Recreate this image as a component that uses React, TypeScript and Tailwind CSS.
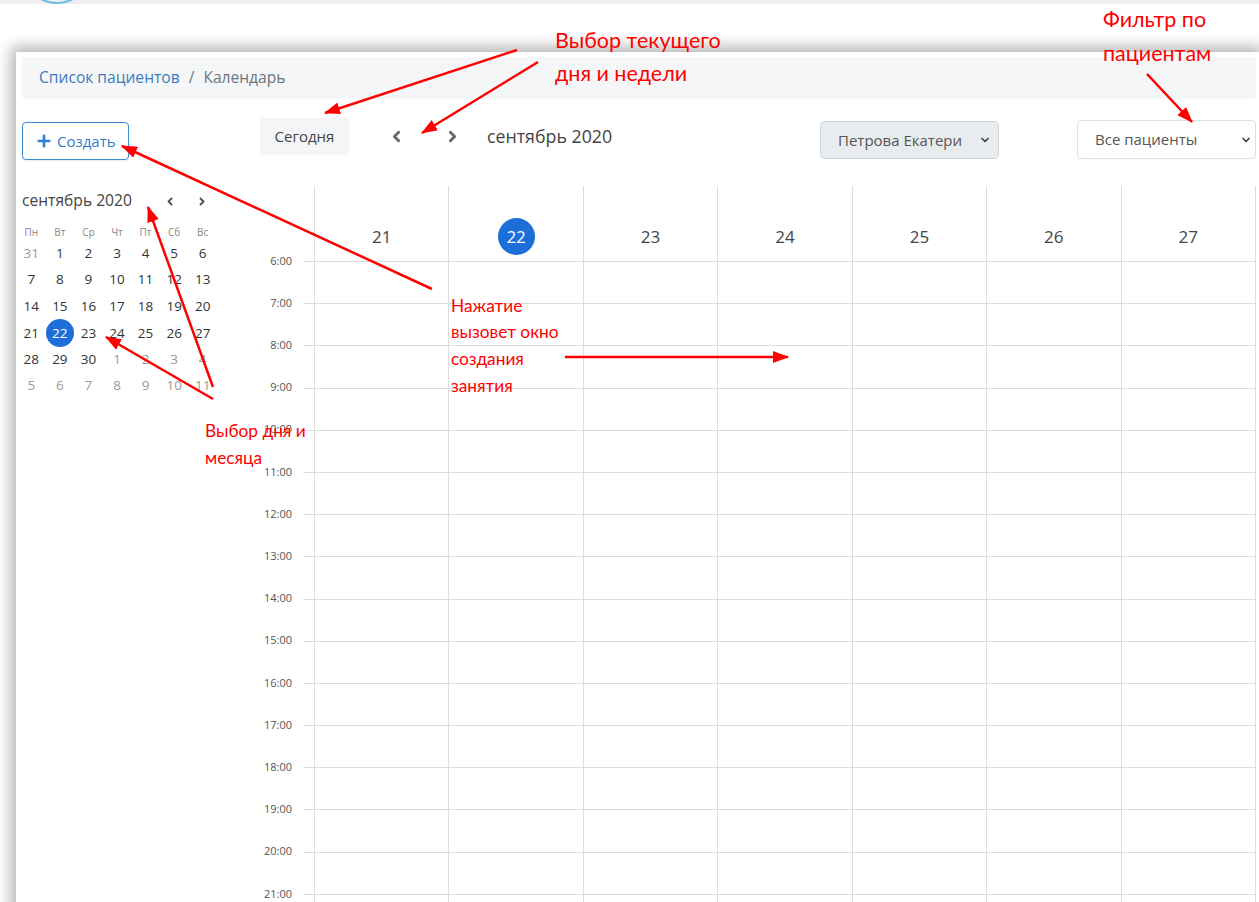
import React from 'react';
import { ChevronLeft, ChevronRight, ChevronDown, Plus } from 'lucide-react';

const ui = { fontFamily: '"Open Sans", "Noto Sans", sans-serif' };
const note = { fontFamily: 'Lato, "Open Sans", sans-serif' };

const weekDays = ['Пн', 'Вт', 'Ср', 'Чт', 'Пт', 'Сб', 'Вс'];

// mini calendar: [day, belongs to current month]
const monthGrid: [number, boolean][][] = [
  [[31, false], [1, true], [2, true], [3, true], [4, true], [5, true], [6, true]],
  [[7, true], [8, true], [9, true], [10, true], [11, true], [12, true], [13, true]],
  [[14, true], [15, true], [16, true], [17, true], [18, true], [19, true], [20, true]],
  [[21, true], [22, true], [23, true], [24, true], [25, true], [26, true], [27, true]],
  [[28, true], [29, true], [30, true], [1, false], [2, false], [3, false], [4, false]],
  [[5, false], [6, false], [7, false], [8, false], [9, false], [10, false], [11, false]],
];

const weekNumbers = [21, 22, 23, 24, 25, 26, 27];
const hours = Array.from({ length: 16 }, (_, i) => `${i + 6}:00`);
const today = 22;

function MiniCalendar() {
  return (
    <div className="mt-[31px]">
      <div className="flex items-center h-[20px]">
        <span className="text-[15.6px] text-[#444]">сентябрь 2020</span>
        <button className="ml-[32px] w-[12px] flex justify-center text-[#555]">
          <ChevronLeft size={13} strokeWidth={4} />
        </button>
        <button className="ml-[20px] w-[12px] flex justify-center text-[#555]">
          <ChevronRight size={13} strokeWidth={4} />
        </button>
      </div>
      <div className="-ml-[5px] mt-[13px] w-[200px]">
        <div className="grid grid-cols-7 h-[16px] items-center">
          {weekDays.map((d) => (
            <span key={d} className="text-center text-[10px] text-[#888]">{d}</span>
          ))}
        </div>
        {monthGrid.map((row, r) => (
          <div key={r} className="grid grid-cols-7 h-[26.4px] items-center">
            {row.map(([day, current], c) => (
              <div key={c} className="flex justify-center">
                {current && day === today ? (
                  <span className="w-[28px] h-[28px] rounded-full bg-[#1c6ed8] text-white text-[13.5px] flex items-center justify-center">
                    {day}
                  </span>
                ) : (
                  <span className={`text-[13.5px] ${current ? 'text-[#333]' : 'text-[#999]'}`}>{day}</span>
                )}
              </div>
            ))}
          </div>
        ))}
      </div>
    </div>
  );
}

function Toolbar() {
  return (
    <div className="flex items-start h-[42px]">
      <button className="ml-[20px] w-[89px] h-[37px] bg-[#f4f5f6] rounded-[3px] text-[15px] text-[#444]">Сегодня</button>
      <div className="flex items-center h-[37px]">
        <button className="ml-[38px] w-[18px] flex justify-center text-[#666]">
          <ChevronLeft size={17} strokeWidth={4} />
        </button>
        <button className="ml-[38px] w-[18px] flex justify-center text-[#666]">
          <ChevronRight size={17} strokeWidth={4} />
        </button>
        <span className="ml-[26px] text-[17.8px] text-[#444]">сентябрь 2020</span>
      </div>
      <div className="flex-1" />
      <div className="mt-[3px] w-[179px] h-[38px] bg-[#e9ecef] border border-[#ced4da] rounded-[4px] flex items-center pl-[17px] pr-[7px]">
        <span className="flex-1 text-[15px] text-[#555] whitespace-nowrap overflow-hidden">Петрова Екатери</span>
        <ChevronDown size={12} strokeWidth={3.5} className="text-[#444]" />
      </div>
      <div className="ml-[78px] mt-[2px] w-[179px] h-[39px] bg-white border border-[#dcdfe3] rounded-[4px] flex items-center pl-[17px] pr-[3px]">
        <span className="flex-1 text-[15px] text-[#555]">Все пациенты</span>
        <ChevronDown size={12} strokeWidth={3.5} className="text-[#444]" />
      </div>
    </div>
  );
}

function WeekGrid() {
  return (
    <div className="mt-[26px] flex">
      {/* hour labels, centred on the hour lines */}
      <div className="w-[63px] pr-[11px]">
        <div className="h-[53.9px]" />
        {hours.map((h) => (
          <div key={h} className="h-[42.2px] flex items-center justify-end text-[11px] text-[#555]">
            {h}
          </div>
        ))}
      </div>
      <div className="w-[11px]">
        <div className="h-[75px]" />
        {hours.map((h) => (
          <div key={h} className="h-[42.2px] border-t border-[#dcdcdc]" />
        ))}
      </div>
      <div className="flex-1 flex border-r border-[#dcdcdc]">
        {weekNumbers.map((n) => (
          <div key={n} className="flex-1 border-l border-[#dcdcdc]">
            <div className="h-[75px] flex items-end justify-center pb-[6px]">
              {n === today ? (
                <span className="w-[37px] h-[37px] rounded-full bg-[#1c6ed8] text-white text-[17px] flex items-center justify-center">
                  {n}
                </span>
              ) : (
                <span className="h-[37px] flex items-center text-[17px] text-[#444]">{n}</span>
              )}
            </div>
            {hours.map((h) => (
              <div key={h} className="h-[42.2px] border-t border-[#dcdcdc]" />
            ))}
          </div>
        ))}
      </div>
    </div>
  );
}

function Annotations() {
  return (
    <div className="absolute inset-0 pointer-events-none text-[#ff0000]" style={note}>
      <svg className="absolute inset-0" width="1259" height="902">
        <defs>
          <marker id="head" markerUnits="userSpaceOnUse" markerWidth="16" markerHeight="12" refX="15" refY="6" orient="auto">
            <path d="M0,0 L16,6 L0,12 z" fill="#ff0000" />
          </marker>
        </defs>
        <g stroke="#ff0000" strokeWidth="2.5" fill="none" markerEnd="url(#head)">
          <path d="M517,50 L325,113" />
          <path d="M538,62 L422,133" />
          <path d="M1147,74 L1192,122" />
          <path d="M432,289 L122,146" />
          <path d="M565,357 L788,357" />
          <path d="M213,387 L148,207" />
          <path d="M213,399 L106,337" />
        </g>
      </svg>
      <div className="absolute left-[555px] top-[23.5px] text-[21.5px] leading-[33px]">
        <div>Выбор текущего</div>
        <div>дня и недели</div>
      </div>
      <div className="absolute left-[1103px] top-[2px] text-[21.5px] leading-[34px]">
        <div>Фильтр по</div>
        <div>пациентам</div>
      </div>
      <div className="absolute left-[451px] top-[292.6px] text-[17.3px] leading-[26.7px]">
        <div>Нажатие</div>
        <div>вызовет окно</div>
        <div>создания</div>
        <div>занятия</div>
      </div>
      <div className="absolute left-[205px] top-[416.5px] text-[17.3px] leading-[27px]">
        <div>Выбор дня и</div>
        <div>месяца</div>
      </div>
    </div>
  );
}

export default function App() {
  return (
    <div className="relative w-[1259px] h-[902px] overflow-hidden bg-white" style={ui}>
      {/* app header remnant */}
      <div className="relative h-[4px] bg-[#efefef] overflow-hidden">
        <div className="absolute left-[22px] -top-[66px] w-[70px] h-[70px] rounded-full border-2 border-[#6cbde8]" />
      </div>

      <div className="ml-[16px] mt-[48px] h-[900px] bg-white pl-[6px] pr-[3px] pt-[5px] shadow-[0_0_14px_5px_rgba(0,0,0,0.3)]">
        <div className="h-[42px] bg-[#f4f6f8] rounded-[3px] flex items-center pl-[17px] text-[15.6px]">
          <span className="text-[#3c7cbf]">Список пациентов</span>
          <span className="mx-[9px] text-[#6c757d]">/</span>
          <span className="text-[#6c757d]">Календарь</span>
        </div>

        <div className="flex mt-[19px]">
          <div className="w-[218px]">
            <button className="mt-[4px] w-[107px] h-[38px] border border-[#3d8bd9] rounded-[4px] bg-white flex items-center pl-[12px] gap-[4px] text-[15px] text-[#3a7cc4] shadow-[0_1px_2px_rgba(0,0,0,0.1)]">
              <Plus size={18} strokeWidth={3.5} className="text-[#2f7fd6]" />
              Создать
            </button>
            <MiniCalendar />
          </div>
          <div className="flex-1">
            <Toolbar />
            <WeekGrid />
          </div>
        </div>
      </div>

      <Annotations />
    </div>
  );
}
